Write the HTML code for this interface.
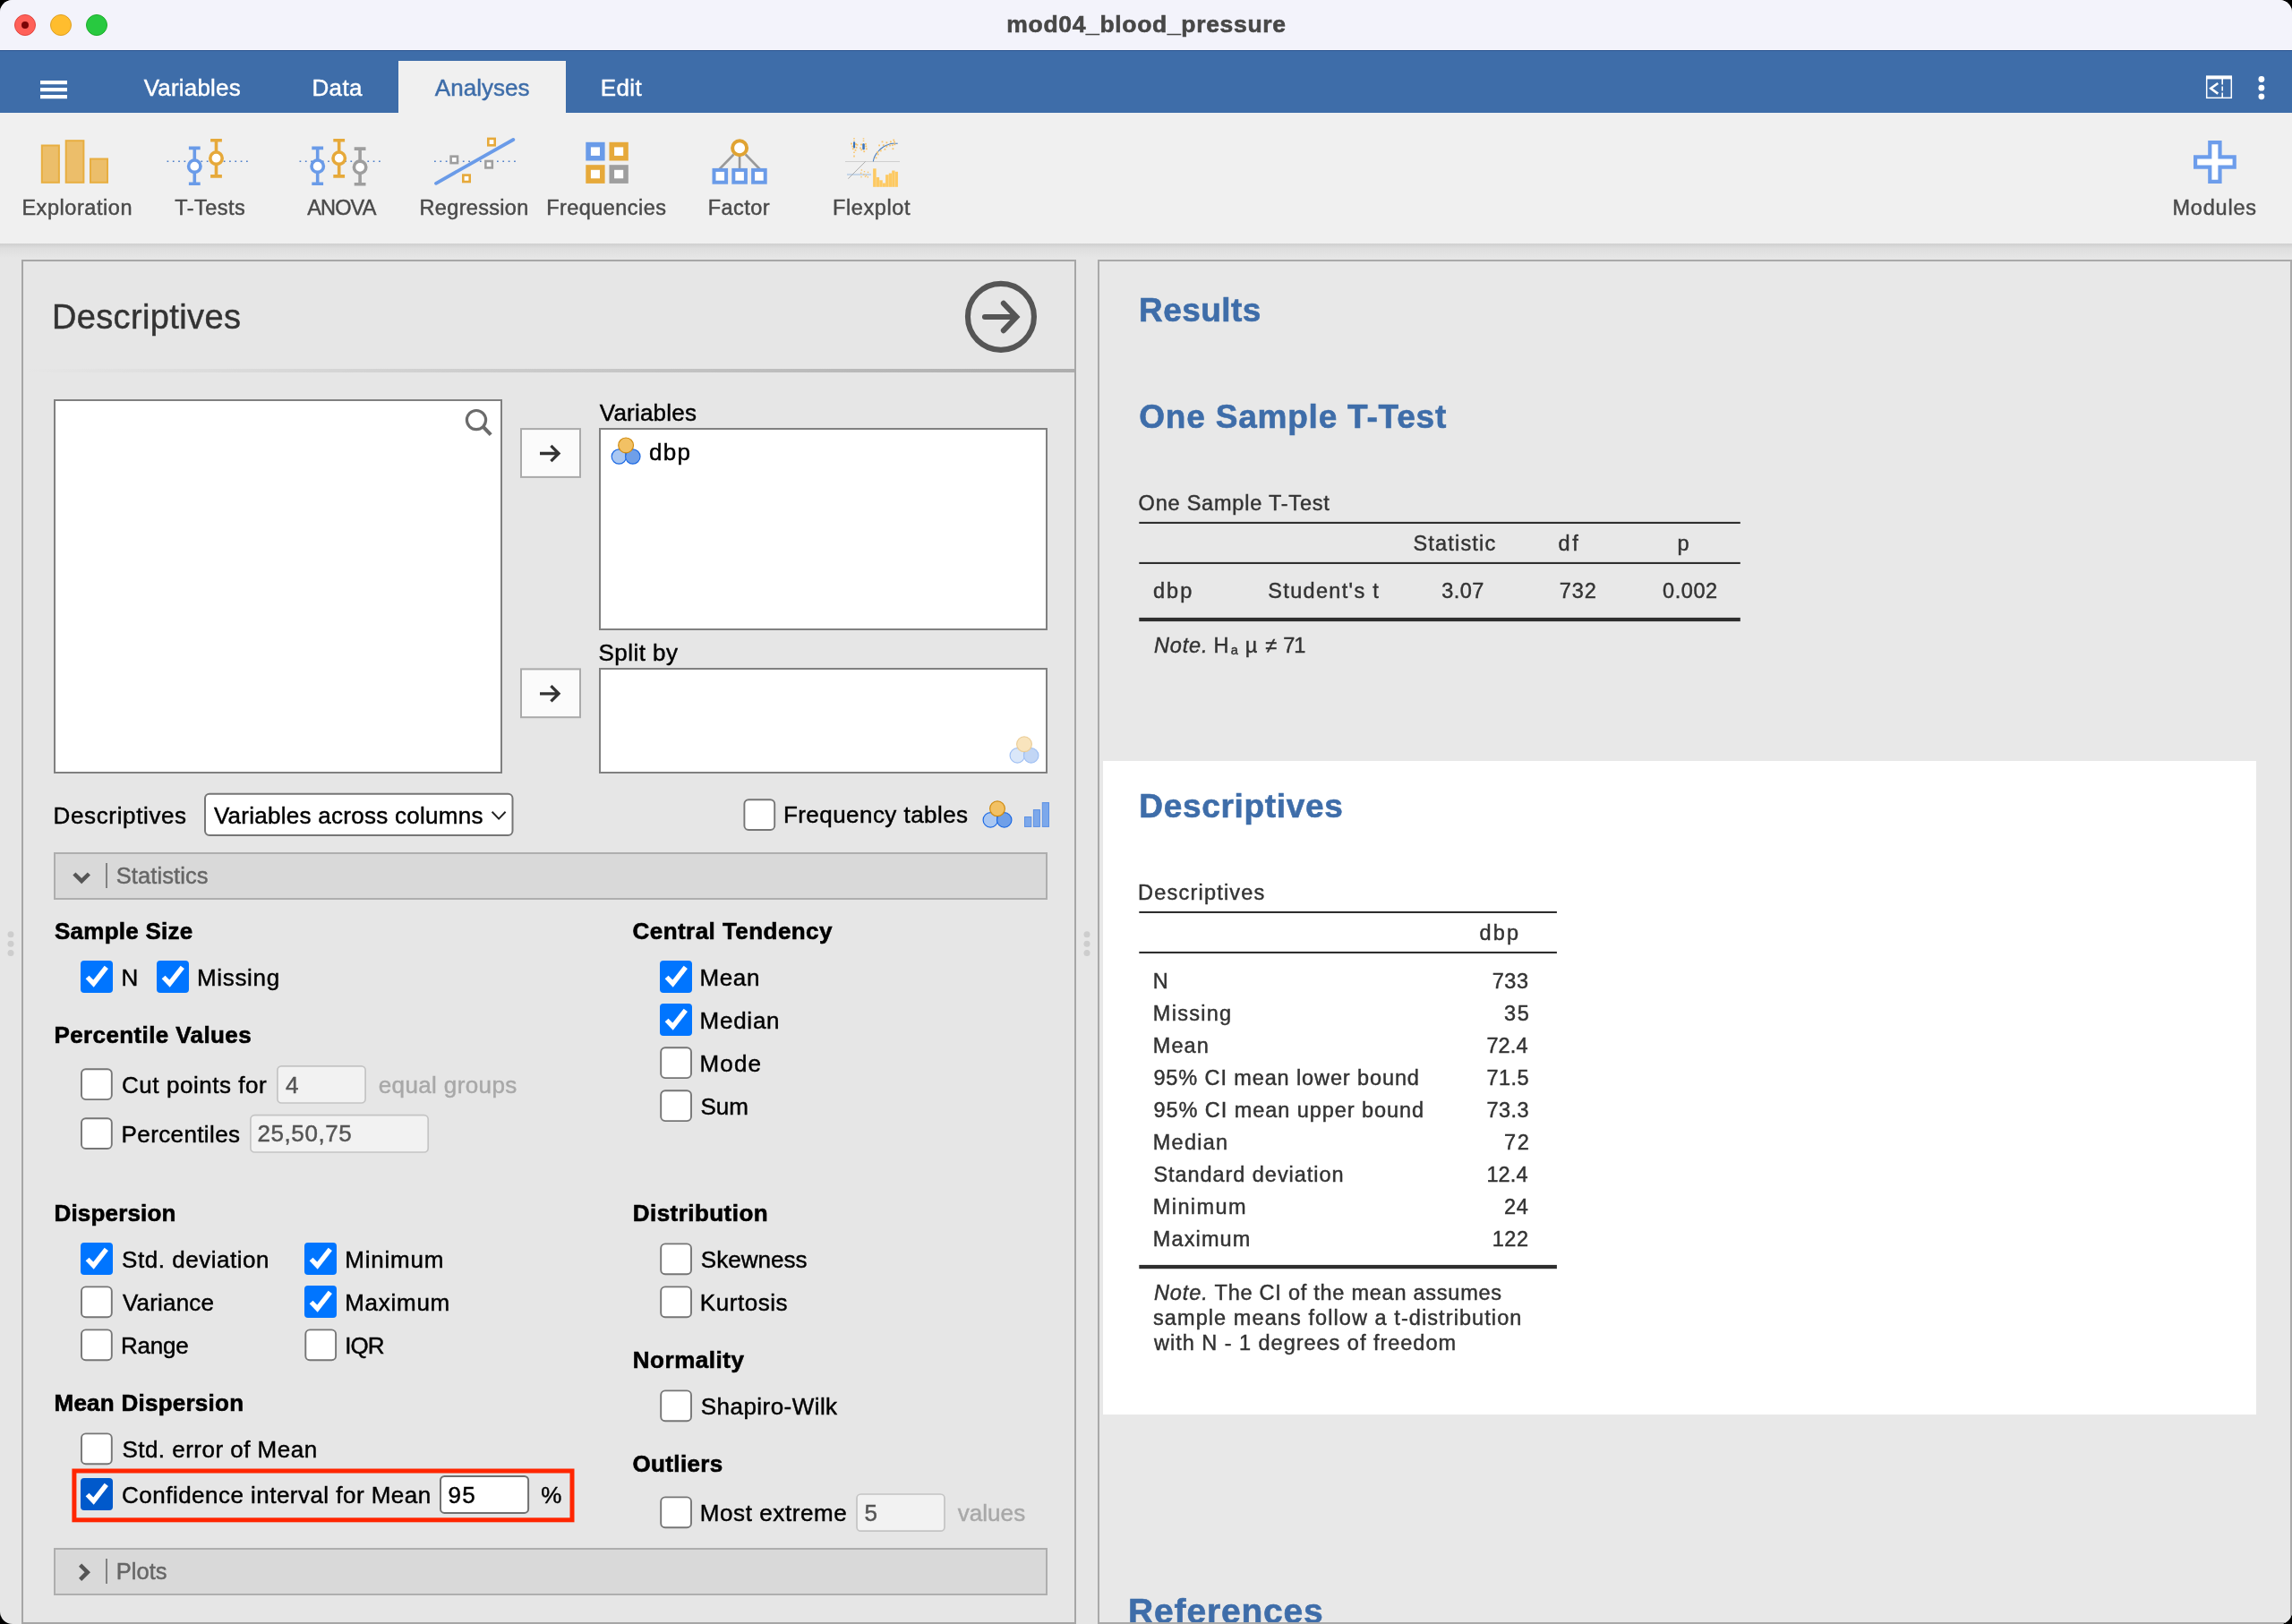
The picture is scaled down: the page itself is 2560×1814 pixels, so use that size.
<!DOCTYPE html>
<html><head><meta charset="utf-8"><title>jamovi</title>
<style>
html,body{margin:0;padding:0;background:#000;}
body{width:2560px;height:1814px;position:relative;overflow:hidden;font-family:"Liberation Sans",sans-serif;}
#win{position:absolute;left:0;top:0;width:2560px;height:1814px;border-radius:14px;overflow:hidden;background:#e6e6e6;}
#win>div{position:absolute;box-sizing:border-box;}
.t{position:absolute;white-space:nowrap;line-height:1;color:#000;}
#txt{position:absolute;left:0;top:0;width:2560px;height:1814px;will-change:transform;}
svg{position:absolute;left:0;top:0;}
</style></head><body>
<div id="win">
<!-- window chrome -->
<div style="left:0;top:0;width:2560px;height:56px;background:#f3f3fb;"></div>
<div style="left:0;top:56px;width:2560px;height:70px;background:#3e6da9;border-top:1px solid #27528f;"></div>
<div style="left:445px;top:68px;width:187px;height:58px;background:#f0f0f0;"></div>
<div style="left:0;top:126px;width:2560px;height:146px;background:#f0f0f0;"></div>
<div style="left:0;top:272px;width:2560px;height:16px;background:linear-gradient(#cfcfcf,#dedede 35%,#e6e6e6);"></div>
<!-- panels -->
<div style="left:24px;top:290px;width:1178px;height:1524px;border:2px solid #a6a6a6;background:#e6e6e6;"></div>
<div style="left:1226px;top:290px;width:1334px;height:1524px;border:2px solid #a9a9a9;background:#e8e8e8;"></div>
<div style="left:1232px;top:850px;width:1288px;height:730px;background:#fff;"></div>
<svg width="2560" height="1814" viewBox="0 0 2560 1814">
<defs><linearGradient id="hs" x1="0" x2="1" y1="0" y2="0"><stop offset="0" stop-color="#adadad" stop-opacity="0"/><stop offset="1" stop-color="#adadad"/></linearGradient></defs>
<circle cx="28" cy="28" r="11.5" fill="#ff6058" stroke="#e14640" stroke-width="1"/>
<circle cx="28" cy="28" r="4" fill="#7a0506"/>
<circle cx="68" cy="28" r="11.5" fill="#ffbd2e" stroke="#dfa023" stroke-width="1"/>
<circle cx="108" cy="28" r="11.5" fill="#28c940" stroke="#1dad2b" stroke-width="1"/>
<rect x="45" y="90" width="30" height="4.2" fill="#fff"/>
<rect x="45" y="98" width="30" height="4.2" fill="#fff"/>
<rect x="45" y="106" width="30" height="4.2" fill="#fff"/>
<rect x="2464.7" y="86.5" width="27.6" height="22.8" fill="none" stroke="#fff" stroke-width="1.5"/>
<rect x="2464" y="84.4" width="29" height="4" fill="#fff"/>
<polyline points="2477.3,93 2469.3,98.8 2477.3,104.6" fill="none" stroke="#fff" stroke-width="2.6"/>
<path d="M2482.2 88v6.5M2482.2 96.5v5M2482.2 103.5v6" stroke="#fff" stroke-width="1.6" fill="none"/>
<circle cx="2525.9" cy="88.5" r="3.4" fill="#fff"/>
<circle cx="2525.9" cy="98.2" r="3.4" fill="#fff"/>
<circle cx="2525.9" cy="107.8" r="3.4" fill="#fff"/>
<rect x="46.8" y="162.5" width="19.1" height="41.3" fill="#ecbe6a" stroke="#e8ae40" stroke-width="2"/>
<rect x="73.7" y="157.2" width="19.7" height="46.6" fill="#ecbe6a" stroke="#e8ae40" stroke-width="2"/>
<rect x="101" y="177.5" width="19" height="26.3" fill="#ecbe6a" stroke="#e8ae40" stroke-width="2"/>
<line x1="186.55" y1="180.3" x2="276.8" y2="180.3" stroke="#4b7dc8" stroke-width="1.6" stroke-dasharray="1.7 4.62"/>
<path d="M217.3 165.4V205.3M210.9 165.4h12.8M210.9 205.3h12.8" stroke="#6a9be8" stroke-width="3.6" fill="none"/>
<circle cx="217.3" cy="185.7" r="6.7" fill="#fff" stroke="#6a9be8" stroke-width="3.6"/>
<path d="M241.5 156.7V196.9M235.1 156.7h12.8M235.1 196.9h12.8" stroke="#e6a93a" stroke-width="3.6" fill="none"/>
<circle cx="241.5" cy="176.7" r="6.7" fill="#fff" stroke="#e6a93a" stroke-width="3.6"/>
<line x1="334.55" y1="180.3" x2="424.8" y2="180.3" stroke="#4b7dc8" stroke-width="1.6" stroke-dasharray="1.7 4.62"/>
<path d="M354.7 165.4V205.3M348.3 165.4h12.8M348.3 205.3h12.8" stroke="#6a9be8" stroke-width="3.6" fill="none"/>
<circle cx="354.7" cy="185.7" r="6.7" fill="#fff" stroke="#6a9be8" stroke-width="3.6"/>
<path d="M378.7 156.7V196.9M372.3 156.7h12.8M372.3 196.9h12.8" stroke="#e6a93a" stroke-width="3.6" fill="none"/>
<circle cx="378.7" cy="176.7" r="6.7" fill="#fff" stroke="#e6a93a" stroke-width="3.6"/>
<path d="M402.1 166.1V205.7M395.7 166.1h12.8M395.7 205.7h12.8" stroke="#9e9e9e" stroke-width="3.6" fill="none"/>
<circle cx="402.1" cy="186.8" r="6.7" fill="#fff" stroke="#9e9e9e" stroke-width="3.6"/>
<line x1="485.05" y1="180.3" x2="575.8" y2="180.3" stroke="#4b7dc8" stroke-width="1.6" stroke-dasharray="1.7 4.66"/>
<rect x="545.3" y="154.9" width="7.4" height="7.4" fill="#fff" stroke="#e6a93a" stroke-width="2.6"/>
<rect x="503.6" y="174.7" width="7.4" height="7.4" fill="#fff" stroke="#9e9e9e" stroke-width="2.6"/>
<rect x="542.4" y="180" width="7.4" height="7.4" fill="#fff" stroke="#9e9e9e" stroke-width="2.6"/>
<rect x="517.3" y="195.6" width="7.4" height="7.4" fill="#fff" stroke="#e6a93a" stroke-width="2.6"/>
<line x1="487" y1="204.8" x2="573.3" y2="156" stroke="#6a9be8" stroke-width="3.8" stroke-linecap="round"/>
<rect x="657.1" y="161.6" width="15.7" height="15.1" fill="#fff" stroke="#6a9be8" stroke-width="5.6"/>
<rect x="683.3" y="161.6" width="15.7" height="15.1" fill="#fff" stroke="#e6a93a" stroke-width="5.6"/>
<rect x="657.1" y="187" width="15.7" height="15.1" fill="#fff" stroke="#e6a93a" stroke-width="5.6"/>
<rect x="683.3" y="187" width="15.7" height="15.1" fill="#fff" stroke="#9e9e9e" stroke-width="5.6"/>
<path d="M819.5 172.5L803.5 189M826.1 174V189M832.7 172.5L848.7 189" stroke="#999" stroke-width="2.6" fill="none"/>
<circle cx="826.1" cy="165.2" r="8" fill="#fff" stroke="#e0a332" stroke-width="4"/>
<rect x="797.5" y="189.9" width="13.6" height="13.8" fill="#fff" stroke="#6a9be8" stroke-width="4"/>
<rect x="819.3" y="189.9" width="13.6" height="13.8" fill="#fff" stroke="#6a9be8" stroke-width="4"/>
<rect x="841.1" y="189.9" width="13.6" height="13.8" fill="#fff" stroke="#6a9be8" stroke-width="4"/>
<rect x="944" y="180" width="61" height="1" fill="#cfcfcf"/>
<rect x="975.1" y="188.3" width="3.55" height="20.5" fill="#fdc962"/>
<rect x="978.8" y="198" width="3.35" height="10.8" fill="#fdc962"/>
<rect x="982.3" y="201.3" width="3.45" height="7.5" fill="#fdc962"/>
<rect x="985.9" y="204.5" width="3.05" height="4.3" fill="#fdc962"/>
<rect x="989.1" y="195.2" width="3.55" height="13.6" fill="#fdc962"/>
<rect x="992.8" y="193.5" width="3.25" height="15.3" fill="#fdc962"/>
<rect x="996.2" y="190.5" width="3.35" height="18.3" fill="#fdc962"/>
<rect x="999.7" y="191.8" width="3.25" height="17" fill="#fdc962"/>
<path d="M975.3 180.3C976 176.5 977 174.5 977.7 173.4C979 171 980.3 169.6 981.6 168.3C983.2 166.6 984.9 165.2 986.7 164C988.5 162.9 990.4 162 992.3 161.4C994 160.8 995.8 160.4 997.5 160.3L1002.7 160.3" fill="none" stroke="#4a7dbd" stroke-width="1.05"/>
<rect x="984.6" y="157.5" width="1.8" height="1.8" fill="#f9c56b"/>
<rect x="989.5" y="158.4" width="1.8" height="1.8" fill="#f9c56b"/>
<rect x="994" y="157.5" width="1.8" height="1.8" fill="#f9c56b"/>
<rect x="997.3" y="155.6" width="1.8" height="1.8" fill="#f9c56b"/>
<rect x="998.1" y="157.7" width="1.8" height="1.8" fill="#f9c56b"/>
<rect x="981.2" y="161.5" width="1.8" height="1.8" fill="#f9c56b"/>
<rect x="985.9" y="161.3" width="1.8" height="1.8" fill="#f9c56b"/>
<rect x="989.4" y="162.8" width="1.8" height="1.8" fill="#f9c56b"/>
<rect x="993.1" y="161.6" width="1.8" height="1.8" fill="#f9c56b"/>
<rect x="995.9" y="161.3" width="1.8" height="1.8" fill="#f9c56b"/>
<rect x="998.4" y="160.4" width="1.8" height="1.8" fill="#f9c56b"/>
<rect x="982.9" y="167.5" width="1.8" height="1.8" fill="#f9c56b"/>
<rect x="987.5" y="165.9" width="1.8" height="1.8" fill="#f9c56b"/>
<rect x="996.5" y="165.3" width="1.8" height="1.8" fill="#f9c56b"/>
<rect x="979.3" y="169.1" width="1.8" height="1.8" fill="#f9c56b"/>
<rect x="979.8" y="171.5" width="1.8" height="1.8" fill="#f9c56b"/>
<rect x="977.6" y="175.4" width="1.8" height="1.8" fill="#f9c56b"/>
<path d="M954 154v1.2M954 156.4v1.2M954 169.5v1.5M954 173.5v2M964.5 154.3v1.2M964.5 156.8v1.2" stroke="#f9c56b" stroke-width="1.6" fill="none"/>
<rect x="950.1" y="159.6" width="1.8" height="1.8" fill="#f9c56b"/>
<rect x="951.4" y="162.6" width="1.8" height="1.8" fill="#f9c56b"/>
<rect x="955.1" y="160.1" width="1.8" height="1.8" fill="#f9c56b"/>
<rect x="955.6" y="163.9" width="1.8" height="1.8" fill="#f9c56b"/>
<rect x="951.9" y="165.4" width="1.8" height="1.8" fill="#f9c56b"/>
<rect x="956.5" y="160.9" width="1.8" height="1.8" fill="#f9c56b"/>
<rect x="954.6" y="166.9" width="1.8" height="1.8" fill="#f9c56b"/>
<rect x="960.1" y="164.5" width="1.8" height="1.8" fill="#f9c56b"/>
<rect x="961.3" y="166.4" width="1.8" height="1.8" fill="#f9c56b"/>
<rect x="966.4" y="162.5" width="1.8" height="1.8" fill="#f9c56b"/>
<rect x="966.9" y="165.4" width="1.8" height="1.8" fill="#f9c56b"/>
<rect x="964.3" y="168.3" width="1.8" height="1.8" fill="#f9c56b"/>
<rect x="961.1" y="160.6" width="1.8" height="1.8" fill="#f9c56b"/>
<rect x="966.1" y="159.9" width="1.8" height="1.8" fill="#f9c56b"/>
<rect x="953" y="158.2" width="2.1" height="7.3" rx="1" fill="#3a73ba"/>
<rect x="963.3" y="160.3" width="2.5" height="7" rx="1" fill="#3a73ba"/>
<rect x="946" y="193.9" width="27" height="2.1" fill="#c6d6e8"/>
<line x1="947.3" y1="199.7" x2="966.7" y2="180.4" stroke="#a6a6a6" stroke-width="0.9"/>
<rect x="961.7" y="189.3" width="1.4" height="1.4" fill="#f9c56b"/>
<rect x="964.8" y="191" width="1.4" height="1.4" fill="#f9c56b"/>
<rect x="960.9" y="192.6" width="1.4" height="1.4" fill="#f9c56b"/>
<rect x="964.1" y="194.3" width="1.4" height="1.4" fill="#f9c56b"/>
<rect x="966.8" y="195.3" width="1.4" height="1.4" fill="#f9c56b"/>
<rect x="961.3" y="196.9" width="1.4" height="1.4" fill="#f9c56b"/>
<rect x="968.6" y="197.1" width="1.4" height="1.4" fill="#f9c56b"/>
<rect x="965.8" y="196.6" width="1.4" height="1.4" fill="#f9c56b"/>
<rect x="968.8" y="191.7" width="1.4" height="1.4" fill="#f9c56b"/>
<polygon points="2468.3,159.2 2479.5,159.2 2479.5,175.4 2495.7,175.4 2495.7,186.6 2479.5,186.6 2479.5,202.8 2468.3,202.8 2468.3,186.6 2452.1,186.6 2452.1,175.4 2468.3,175.4" fill="#fff" stroke="#6d9deb" stroke-width="4.2"/>
<rect x="26" y="412" width="1174" height="4" fill="url(#hs)"/>
<circle cx="1117.95" cy="353.85" r="37" fill="none" stroke="#555" stroke-width="6.1"/>
<path d="M1100 354H1134M1120.9 338.8L1135.3 354L1120.9 369.2" fill="none" stroke="#555" stroke-width="6.1" stroke-linecap="round" stroke-linejoin="miter"/>
<rect x="61" y="447" width="499" height="416" fill="#fff" stroke="#808080" stroke-width="2"/>
<rect x="670" y="479" width="499" height="224" fill="#fff" stroke="#808080" stroke-width="2"/>
<rect x="670" y="747" width="499" height="116" fill="#fff" stroke="#808080" stroke-width="2"/>
<circle cx="532" cy="469.1" r="10.6" fill="none" stroke="#6b6b6b" stroke-width="3.2"/>
<line x1="539.8" y1="476.9" x2="548.2" y2="485.6" stroke="#6b6b6b" stroke-width="4.2"/>
<rect x="582" y="479.1" width="66" height="53.8" fill="#fbfbfb" stroke="#aaa" stroke-width="2"/>
<path d="M603 506.5H623.5M615.4 497.9L624 506.5L615.4 515.1" fill="none" stroke="#333" stroke-width="3.3"/>
<rect x="582" y="747.4" width="66" height="53.8" fill="#fbfbfb" stroke="#aaa" stroke-width="2"/>
<path d="M603 774.8H623.5M615.4 766.2L624 774.8L615.4 783.4" fill="none" stroke="#333" stroke-width="3.3"/>
<g>
<circle cx="691.4" cy="510" r="8.2" fill="#a9c7f2" stroke="#1c69e3" stroke-width="1.2"/>
<circle cx="706.8" cy="510" r="8.2" fill="#6f9fe8" stroke="#1c69e3" stroke-width="1.2"/>
<circle cx="699.1" cy="497.4" r="8.4" fill="#f2c164" stroke="#d08c12" stroke-width="1.2"/>
</g>
<g opacity="0.42">
<circle cx="1136.3" cy="843.9" r="8.2" fill="#a9c7f2" stroke="#1c69e3" stroke-width="1.2"/>
<circle cx="1151.7" cy="843.9" r="8.2" fill="#6f9fe8" stroke="#1c69e3" stroke-width="1.2"/>
<circle cx="1144" cy="831.3" r="8.4" fill="#f2c164" stroke="#d08c12" stroke-width="1.2"/>
</g>
<g>
<circle cx="1106.3" cy="915.9" r="8.2" fill="#a9c7f2" stroke="#1c69e3" stroke-width="1.2"/>
<circle cx="1121.7" cy="915.9" r="8.2" fill="#6f9fe8" stroke="#1c69e3" stroke-width="1.2"/>
<circle cx="1114" cy="903.3" r="8.4" fill="#f2c164" stroke="#d08c12" stroke-width="1.2"/>
</g>
<rect x="1144.5" y="912.5" width="7.3" height="10.9" fill="#7ca8eb" stroke="#5b90e4" stroke-width="1"/>
<rect x="1154.4" y="904.6" width="7" height="18.8" fill="#7ca8eb" stroke="#5b90e4" stroke-width="1"/>
<rect x="1164.3" y="896.6" width="7.2" height="26.8" fill="#7ca8eb" stroke="#5b90e4" stroke-width="1"/>
<rect x="229" y="886.7" width="343.5" height="46.3" rx="5" fill="#fff" stroke="#767676" stroke-width="2"/>
<polyline points="549.6,906.8 557.1,914.6 564.6,906.8" fill="none" stroke="#222" stroke-width="2"/>
<rect x="61" y="953" width="1108" height="51" fill="#d9d9d9" stroke="#aeaeae" stroke-width="2"/>
<line x1="119" y1="964.1" x2="119" y2="992" stroke="#828282" stroke-width="2"/>
<rect x="61" y="1730" width="1108" height="51" fill="#d9d9d9" stroke="#aeaeae" stroke-width="2"/>
<line x1="119" y1="1741.1" x2="119" y2="1769" stroke="#828282" stroke-width="2"/>
<polyline points="82.9,976 91.15,984.1 99.4,976" fill="none" stroke="#555" stroke-width="4.5"/>
<polyline points="89.6,1748.1 97.8,1756.2 89.6,1764.3" fill="none" stroke="#555" stroke-width="4.5"/>
<circle cx="12" cy="1043.8" r="3.5" fill="#cdcdcd"/>
<circle cx="12" cy="1054.2" r="3.5" fill="#cdcdcd"/>
<circle cx="12" cy="1064.6" r="3.5" fill="#cdcdcd"/>
<circle cx="1214" cy="1043.8" r="3.5" fill="#cdcdcd"/>
<circle cx="1214" cy="1054.2" r="3.5" fill="#cdcdcd"/>
<circle cx="1214" cy="1064.6" r="3.5" fill="#cdcdcd"/>
<rect x="90" y="1073" width="36" height="36" rx="4" fill="#0075ff"/>
<polyline points="97.6,1091.5 104.5,1098.7 118.8,1080.4" fill="none" stroke="#fff" stroke-width="5.4"/>
<rect x="175" y="1073" width="36" height="36" rx="4" fill="#0075ff"/>
<polyline points="182.6,1091.5 189.5,1098.7 203.8,1080.4" fill="none" stroke="#fff" stroke-width="5.4"/>
<rect x="737" y="1073" width="36" height="36" rx="4" fill="#0075ff"/>
<polyline points="744.6,1091.5 751.5,1098.7 765.8,1080.4" fill="none" stroke="#fff" stroke-width="5.4"/>
<rect x="737" y="1121" width="36" height="36" rx="4" fill="#0075ff"/>
<polyline points="744.6,1139.5 751.5,1146.7 765.8,1128.4" fill="none" stroke="#fff" stroke-width="5.4"/>
<rect x="90" y="1388" width="36" height="36" rx="4" fill="#0075ff"/>
<polyline points="97.6,1406.5 104.5,1413.7 118.8,1395.4" fill="none" stroke="#fff" stroke-width="5.4"/>
<rect x="340" y="1388" width="36" height="36" rx="4" fill="#0075ff"/>
<polyline points="347.6,1406.5 354.5,1413.7 368.8,1395.4" fill="none" stroke="#fff" stroke-width="5.4"/>
<rect x="340" y="1436" width="36" height="36" rx="4" fill="#0075ff"/>
<polyline points="347.6,1454.5 354.5,1461.7 368.8,1443.4" fill="none" stroke="#fff" stroke-width="5.4"/>
<rect x="90" y="1651" width="36" height="36" rx="4" fill="#0059cb"/>
<polyline points="97.6,1669.5 104.5,1676.7 118.8,1658.4" fill="none" stroke="#fff" stroke-width="5.4"/>
<rect x="831.4" y="893.2" width="33.8" height="33.8" rx="4.8" fill="#fff" stroke="#767676" stroke-width="1.9"/>
<rect x="738.2" y="1170.3" width="33.8" height="33.8" rx="4.8" fill="#fff" stroke="#767676" stroke-width="1.9"/>
<rect x="738.2" y="1218.3" width="33.8" height="33.8" rx="4.8" fill="#fff" stroke="#767676" stroke-width="1.9"/>
<rect x="91" y="1194.3" width="33.8" height="33.8" rx="4.8" fill="#fff" stroke="#767676" stroke-width="1.9"/>
<rect x="91" y="1249.2" width="33.8" height="33.8" rx="4.8" fill="#fff" stroke="#767676" stroke-width="1.9"/>
<rect x="91" y="1437.4" width="33.8" height="33.8" rx="4.8" fill="#fff" stroke="#767676" stroke-width="1.9"/>
<rect x="91" y="1485.4" width="33.8" height="33.8" rx="4.8" fill="#fff" stroke="#767676" stroke-width="1.9"/>
<rect x="341.3" y="1485.4" width="33.8" height="33.8" rx="4.8" fill="#fff" stroke="#767676" stroke-width="1.9"/>
<rect x="738.2" y="1389.4" width="33.8" height="33.8" rx="4.8" fill="#fff" stroke="#767676" stroke-width="1.9"/>
<rect x="738.2" y="1437.4" width="33.8" height="33.8" rx="4.8" fill="#fff" stroke="#767676" stroke-width="1.9"/>
<rect x="738.2" y="1553.4" width="33.8" height="33.8" rx="4.8" fill="#fff" stroke="#767676" stroke-width="1.9"/>
<rect x="91" y="1601.4" width="33.8" height="33.8" rx="4.8" fill="#fff" stroke="#767676" stroke-width="1.9"/>
<rect x="738.2" y="1672.4" width="33.8" height="33.8" rx="4.8" fill="#fff" stroke="#767676" stroke-width="1.9"/>
<rect x="309.9" y="1190.8" width="98.2" height="41.2" rx="4.5" fill="#f2f2f2" stroke="#c4c4c4" stroke-width="1.7"/>
<rect x="279.9" y="1245.7" width="198.3" height="41.3" rx="4.5" fill="#f2f2f2" stroke="#c4c4c4" stroke-width="1.7"/>
<rect x="957" y="1669" width="98" height="41.2" rx="4.5" fill="#f2f2f2" stroke="#c4c4c4" stroke-width="1.7"/>
<rect x="492" y="1648.9" width="98.1" height="41" rx="4.5" fill="#fff" stroke="#707070" stroke-width="2"/>
<rect x="82.9" y="1643" width="556.1" height="54.8" fill="none" stroke="#ff2600" stroke-width="5"/>
<rect x="1272.3" y="582.9" width="671.5" height="2.1" fill="#2e2e2e"/>
<rect x="1272.3" y="627.9" width="671.5" height="2.1" fill="#2e2e2e"/>
<rect x="1272.3" y="689.9" width="671.5" height="4.2" fill="#2e2e2e"/>
<rect x="1272.3" y="1017.9" width="466.6" height="2.1" fill="#2e2e2e"/>
<rect x="1272.3" y="1062.9" width="466.6" height="2.1" fill="#2e2e2e"/>
<rect x="1272.3" y="1412.9" width="466.6" height="4.3" fill="#2e2e2e"/>
</svg>
<div id="txt">
<span class="t" style="left:1124.3px;top:14px;font-size:26.5px;font-weight:700;color:#474747;letter-spacing:0.67px;-webkit-text-stroke:0.6px;">mod04_blood_pressure</span>
<span class="t" style="left:160.7px;top:85px;font-size:26px;color:#fff;letter-spacing:0.19px;-webkit-text-stroke:0.45px;">Variables</span>
<span class="t" style="left:348.5px;top:85px;font-size:26px;color:#fff;letter-spacing:0.33px;-webkit-text-stroke:0.45px;">Data</span>
<span class="t" style="left:485.8px;top:85px;font-size:26px;color:#3e6da9;letter-spacing:0.04px;-webkit-text-stroke:0.45px;">Analyses</span>
<span class="t" style="left:670.7px;top:85px;font-size:26px;color:#fff;letter-spacing:0.43px;-webkit-text-stroke:0.45px;">Edit</span>
<span class="t" style="left:24.4px;top:221px;font-size:23.5px;color:#4a4a4a;letter-spacing:0.55px;-webkit-text-stroke:0.45px;">Exploration</span>
<span class="t" style="left:195.2px;top:221px;font-size:23.5px;color:#4a4a4a;letter-spacing:0.47px;-webkit-text-stroke:0.45px;">T-Tests</span>
<span class="t" style="left:343.3px;top:221px;font-size:23.5px;color:#4a4a4a;letter-spacing:-0.88px;-webkit-text-stroke:0.45px;">ANOVA</span>
<span class="t" style="left:468.6px;top:221px;font-size:23.5px;color:#4a4a4a;letter-spacing:0.31px;-webkit-text-stroke:0.45px;">Regression</span>
<span class="t" style="left:610.2px;top:221px;font-size:23.5px;color:#4a4a4a;letter-spacing:0.44px;-webkit-text-stroke:0.45px;">Frequencies</span>
<span class="t" style="left:790.8px;top:221px;font-size:23.5px;color:#4a4a4a;letter-spacing:0.44px;-webkit-text-stroke:0.45px;">Factor</span>
<span class="t" style="left:930.0px;top:221px;font-size:23.5px;color:#4a4a4a;letter-spacing:0.61px;-webkit-text-stroke:0.45px;">Flexplot</span>
<span class="t" style="left:2426.4px;top:221px;font-size:23.5px;color:#4a4a4a;letter-spacing:0.80px;-webkit-text-stroke:0.45px;">Modules</span>
<span class="t" style="left:57.9px;top:335px;font-size:38px;color:#333;letter-spacing:0.37px;-webkit-text-stroke:0.45px;">Descriptives</span>
<span class="t" style="left:669.8px;top:448px;font-size:26px;letter-spacing:0.21px;-webkit-text-stroke:0.45px;">Variables</span>
<span class="t" style="left:725.0px;top:492px;font-size:26px;letter-spacing:1.30px;-webkit-text-stroke:0.45px;">dbp</span>
<span class="t" style="left:668.5px;top:716px;font-size:26px;letter-spacing:0.46px;-webkit-text-stroke:0.45px;">Split by</span>
<span class="t" style="left:59.6px;top:898px;font-size:26px;letter-spacing:0.63px;-webkit-text-stroke:0.45px;">Descriptives</span>
<span class="t" style="left:238.9px;top:898px;font-size:26px;letter-spacing:0.27px;-webkit-text-stroke:0.45px;">Variables across columns</span>
<span class="t" style="left:874.9px;top:897px;font-size:26px;letter-spacing:0.45px;-webkit-text-stroke:0.45px;">Frequency tables</span>
<span class="t" style="left:129.7px;top:966px;font-size:25.5px;color:#666;letter-spacing:0.09px;-webkit-text-stroke:0.45px;">Statistics</span>
<span class="t" style="left:61.0px;top:1027px;font-size:26px;font-weight:700;letter-spacing:0.24px;-webkit-text-stroke:0.6px;">Sample Size</span>
<span class="t" style="left:135.6px;top:1079px;font-size:26px;-webkit-text-stroke:0.45px;">N</span>
<span class="t" style="left:220.0px;top:1079px;font-size:26px;letter-spacing:0.67px;-webkit-text-stroke:0.45px;">Missing</span>
<span class="t" style="left:706.5px;top:1027px;font-size:26px;font-weight:700;letter-spacing:0.45px;-webkit-text-stroke:0.6px;">Central Tendency</span>
<span class="t" style="left:781.5px;top:1079px;font-size:26px;letter-spacing:0.60px;-webkit-text-stroke:0.45px;">Mean</span>
<span class="t" style="left:781.5px;top:1127px;font-size:26px;letter-spacing:0.76px;-webkit-text-stroke:0.45px;">Median</span>
<span class="t" style="left:781.5px;top:1175px;font-size:26px;letter-spacing:1.13px;-webkit-text-stroke:0.45px;">Mode</span>
<span class="t" style="left:782.5px;top:1223px;font-size:26px;-webkit-text-stroke:0.45px;">Sum</span>
<span class="t" style="left:60.5px;top:1143px;font-size:26px;font-weight:700;letter-spacing:0.39px;-webkit-text-stroke:0.6px;">Percentile Values</span>
<span class="t" style="left:136.0px;top:1199px;font-size:26px;letter-spacing:0.55px;-webkit-text-stroke:0.45px;">Cut points for</span>
<span class="t" style="left:319.0px;top:1199px;font-size:26px;color:#555;-webkit-text-stroke:0.45px;">4</span>
<span class="t" style="left:422.7px;top:1199px;font-size:26px;color:#a8a8a8;letter-spacing:0.39px;-webkit-text-stroke:0.45px;">equal groups</span>
<span class="t" style="left:135.6px;top:1254px;font-size:26px;letter-spacing:0.38px;-webkit-text-stroke:0.45px;">Percentiles</span>
<span class="t" style="left:287.4px;top:1253px;font-size:26px;color:#555;letter-spacing:0.60px;-webkit-text-stroke:0.45px;">25,50,75</span>
<span class="t" style="left:60.5px;top:1342px;font-size:26px;font-weight:700;letter-spacing:0.17px;-webkit-text-stroke:0.6px;">Dispersion</span>
<span class="t" style="left:136.1px;top:1394px;font-size:26px;letter-spacing:0.52px;-webkit-text-stroke:0.45px;">Std. deviation</span>
<span class="t" style="left:385.2px;top:1394px;font-size:26px;letter-spacing:0.80px;-webkit-text-stroke:0.45px;">Minimum</span>
<span class="t" style="left:136.9px;top:1442px;font-size:26px;letter-spacing:0.20px;-webkit-text-stroke:0.45px;">Variance</span>
<span class="t" style="left:385.2px;top:1442px;font-size:26px;letter-spacing:0.73px;-webkit-text-stroke:0.45px;">Maximum</span>
<span class="t" style="left:135.0px;top:1490px;font-size:26px;letter-spacing:-0.25px;-webkit-text-stroke:0.45px;">Range</span>
<span class="t" style="left:385.2px;top:1490px;font-size:26px;letter-spacing:-1.00px;-webkit-text-stroke:0.45px;">IQR</span>
<span class="t" style="left:706.8px;top:1342px;font-size:26px;font-weight:700;letter-spacing:0.45px;-webkit-text-stroke:0.6px;">Distribution</span>
<span class="t" style="left:782.8px;top:1394px;font-size:26px;letter-spacing:0.04px;-webkit-text-stroke:0.45px;">Skewness</span>
<span class="t" style="left:781.8px;top:1442px;font-size:26px;letter-spacing:0.54px;-webkit-text-stroke:0.45px;">Kurtosis</span>
<span class="t" style="left:60.5px;top:1554px;font-size:26px;font-weight:700;letter-spacing:0.25px;-webkit-text-stroke:0.6px;">Mean Dispersion</span>
<span class="t" style="left:706.8px;top:1506px;font-size:26px;font-weight:700;letter-spacing:0.53px;-webkit-text-stroke:0.6px;">Normality</span>
<span class="t" style="left:136.4px;top:1606px;font-size:26px;letter-spacing:0.48px;-webkit-text-stroke:0.45px;">Std. error of Mean</span>
<span class="t" style="left:782.8px;top:1558px;font-size:26px;letter-spacing:0.45px;-webkit-text-stroke:0.45px;">Shapiro-Wilk</span>
<span class="t" style="left:706.5px;top:1622px;font-size:26px;font-weight:700;letter-spacing:0.36px;-webkit-text-stroke:0.6px;">Outliers</span>
<span class="t" style="left:136.1px;top:1657px;font-size:26px;letter-spacing:0.47px;-webkit-text-stroke:0.45px;">Confidence interval for Mean</span>
<span class="t" style="left:500.5px;top:1657px;font-size:26px;letter-spacing:1.20px;-webkit-text-stroke:0.45px;">95</span>
<span class="t" style="left:604.3px;top:1657px;font-size:26px;-webkit-text-stroke:0.45px;">%</span>
<span class="t" style="left:781.8px;top:1677px;font-size:26px;letter-spacing:0.58px;-webkit-text-stroke:0.45px;">Most extreme</span>
<span class="t" style="left:965.6px;top:1677px;font-size:26px;color:#555;-webkit-text-stroke:0.45px;">5</span>
<span class="t" style="left:1069.7px;top:1677px;font-size:26px;color:#a8a8a8;letter-spacing:0.06px;-webkit-text-stroke:0.45px;">values</span>
<span class="t" style="left:129.7px;top:1743px;font-size:25.5px;color:#666;letter-spacing:0.05px;-webkit-text-stroke:0.45px;">Plots</span>
<span class="t" style="left:1272.1px;top:328px;font-size:37px;font-weight:700;color:#3e6da9;letter-spacing:0.43px;-webkit-text-stroke:0.6px;">Results</span>
<span class="t" style="left:1272.3px;top:447px;font-size:37px;font-weight:700;color:#3e6da9;letter-spacing:0.79px;-webkit-text-stroke:0.6px;">One Sample T-Test</span>
<span class="t" style="left:1271.6px;top:551px;font-size:23.5px;color:#333;letter-spacing:0.78px;-webkit-text-stroke:0.45px;">One Sample T-Test</span>
<span class="t" style="left:1578.4px;top:596px;font-size:23.5px;color:#333;letter-spacing:1.20px;-webkit-text-stroke:0.45px;">Statistic</span>
<span class="t" style="left:1740.5px;top:596px;font-size:23.5px;color:#333;letter-spacing:2.60px;-webkit-text-stroke:0.45px;">df</span>
<span class="t" style="left:1873.6px;top:596px;font-size:23.5px;color:#333;-webkit-text-stroke:0.45px;">p</span>
<span class="t" style="left:1288.0px;top:649px;font-size:23.5px;color:#333;letter-spacing:2.05px;-webkit-text-stroke:0.45px;">dbp</span>
<span class="t" style="left:1416.3px;top:649px;font-size:23.5px;color:#333;letter-spacing:1.33px;-webkit-text-stroke:0.45px;">Student's t</span>
<span class="t" style="left:1610.2px;top:649px;font-size:23.5px;color:#333;letter-spacing:0.43px;-webkit-text-stroke:0.45px;">3.07</span>
<span class="t" style="left:1741.7px;top:649px;font-size:23.5px;color:#333;letter-spacing:1.00px;-webkit-text-stroke:0.45px;">732</span>
<span class="t" style="left:1857.0px;top:649px;font-size:23.5px;color:#333;letter-spacing:0.57px;-webkit-text-stroke:0.45px;">0.002</span>
<span class="t" style="left:1288.9px;top:710px;font-size:23.5px;color:#333;letter-spacing:0.85px;-webkit-text-stroke:0.45px;font-style:italic;">Note.</span>
<span class="t" style="left:1355.4px;top:710px;font-size:23.5px;color:#333;-webkit-text-stroke:0.45px;">H</span>
<span class="t" style="left:1374.7px;top:719px;font-size:14.5px;color:#333;-webkit-text-stroke:0.45px;">a</span>
<span class="t" style="left:1390.7px;top:710px;font-size:23.5px;color:#333;-webkit-text-stroke:0.45px;">µ</span>
<span class="t" style="left:1413.3px;top:710px;font-size:23.5px;color:#333;-webkit-text-stroke:0.45px;">≠</span>
<span class="t" style="left:1433.3px;top:710px;font-size:23.5px;color:#333;letter-spacing:-1.10px;-webkit-text-stroke:0.45px;">71</span>
<span class="t" style="left:1272.3px;top:882px;font-size:37px;font-weight:700;color:#3e6da9;letter-spacing:0.68px;-webkit-text-stroke:0.6px;">Descriptives</span>
<span class="t" style="left:1271.1px;top:986px;font-size:23.5px;color:#333;letter-spacing:1.20px;-webkit-text-stroke:0.45px;">Descriptives</span>
<span class="t" style="left:1652.4px;top:1031px;font-size:23.5px;color:#333;letter-spacing:2.25px;-webkit-text-stroke:0.45px;">dbp</span>
<span class="t" style="left:1287.8px;top:1085px;font-size:23.5px;color:#333;-webkit-text-stroke:0.45px;">N</span>
<span class="t" style="left:1666.7px;top:1085px;font-size:23.5px;color:#333;letter-spacing:0.55px;-webkit-text-stroke:0.45px;">733</span>
<span class="t" style="left:1287.8px;top:1121px;font-size:23.5px;color:#333;letter-spacing:1.28px;-webkit-text-stroke:0.45px;">Missing</span>
<span class="t" style="left:1680.0px;top:1121px;font-size:23.5px;color:#333;letter-spacing:1.80px;-webkit-text-stroke:0.45px;">35</span>
<span class="t" style="left:1287.8px;top:1157px;font-size:23.5px;color:#333;letter-spacing:1.07px;-webkit-text-stroke:0.45px;">Mean</span>
<span class="t" style="left:1660.4px;top:1157px;font-size:23.5px;color:#333;letter-spacing:0.13px;-webkit-text-stroke:0.45px;">72.4</span>
<span class="t" style="left:1288.4px;top:1193px;font-size:23.5px;color:#333;letter-spacing:0.89px;-webkit-text-stroke:0.45px;">95% CI mean lower bound</span>
<span class="t" style="left:1660.4px;top:1193px;font-size:23.5px;color:#333;letter-spacing:0.47px;-webkit-text-stroke:0.45px;">71.5</span>
<span class="t" style="left:1288.4px;top:1229px;font-size:23.5px;color:#333;letter-spacing:0.95px;-webkit-text-stroke:0.45px;">95% CI mean upper bound</span>
<span class="t" style="left:1660.4px;top:1229px;font-size:23.5px;color:#333;letter-spacing:0.47px;-webkit-text-stroke:0.45px;">73.3</span>
<span class="t" style="left:1287.8px;top:1265px;font-size:23.5px;color:#333;letter-spacing:1.24px;-webkit-text-stroke:0.45px;">Median</span>
<span class="t" style="left:1680.0px;top:1265px;font-size:23.5px;color:#333;letter-spacing:1.80px;-webkit-text-stroke:0.45px;">72</span>
<span class="t" style="left:1288.4px;top:1301px;font-size:23.5px;color:#333;letter-spacing:0.95px;-webkit-text-stroke:0.45px;">Standard deviation</span>
<span class="t" style="left:1660.4px;top:1301px;font-size:23.5px;color:#333;letter-spacing:0.13px;-webkit-text-stroke:0.45px;">12.4</span>
<span class="t" style="left:1287.8px;top:1337px;font-size:23.5px;color:#333;letter-spacing:1.40px;-webkit-text-stroke:0.45px;">Minimum</span>
<span class="t" style="left:1680.0px;top:1337px;font-size:23.5px;color:#333;letter-spacing:0.80px;-webkit-text-stroke:0.45px;">24</span>
<span class="t" style="left:1287.8px;top:1373px;font-size:23.5px;color:#333;letter-spacing:1.12px;-webkit-text-stroke:0.45px;">Maximum</span>
<span class="t" style="left:1666.7px;top:1373px;font-size:23.5px;color:#333;letter-spacing:0.55px;-webkit-text-stroke:0.45px;">122</span>
<span class="t" style="left:1288.9px;top:1433px;font-size:23.5px;color:#333;letter-spacing:0.92px;-webkit-text-stroke:0.45px;font-style:italic;">Note.</span>
<span class="t" style="left:1356.6px;top:1433px;font-size:23.5px;color:#333;letter-spacing:0.75px;-webkit-text-stroke:0.45px;">The CI of the mean assumes</span>
<span class="t" style="left:1288.0px;top:1461px;font-size:23.5px;color:#333;letter-spacing:1.08px;-webkit-text-stroke:0.45px;">sample means follow a t-distribution</span>
<span class="t" style="left:1289.0px;top:1489px;font-size:23.5px;color:#333;letter-spacing:0.98px;-webkit-text-stroke:0.45px;">with N - 1 degrees of freedom</span>
<span class="t" style="left:1260.1px;top:1780px;font-size:39px;font-weight:700;color:#3e6da9;letter-spacing:0.82px;-webkit-text-stroke:0.6px;">References</span>
</div>
<div style="left:1226px;top:1812px;width:1334px;height:2px;background:#a9a9a9;"></div>
</div>
</body></html>
